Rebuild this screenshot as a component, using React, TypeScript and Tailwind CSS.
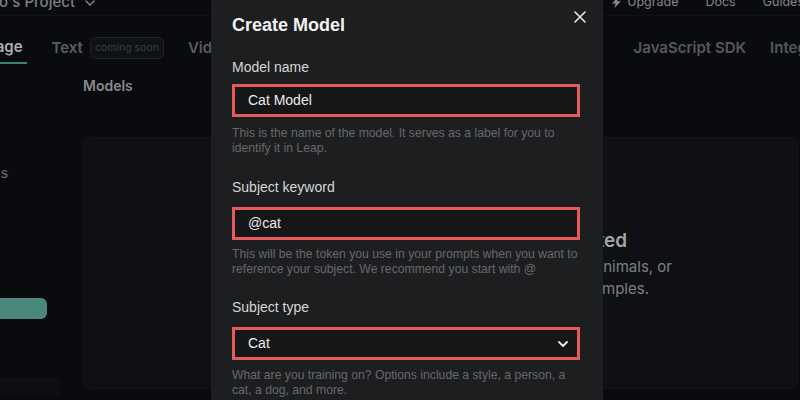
import React from "react";

const Field = ({
  label,
  value,
  help,
  select,
  labelGap,
  helpGap,
  top,
}: {
  label: string;
  value: string;
  help: string;
  select?: boolean;
  labelGap: string;
  helpGap: string;
  top: string;
}) => (
  <div className={top}>
    <div className="text-[14px] leading-[20px] text-[#d6d6d6]">{label}</div>
    <div
      className={`${labelGap} flex h-[33px] items-center justify-between border-[3px] border-[#e35b5c] bg-[#151618] pl-[13px] pr-[8px] text-[14px] text-[#ececec]`}
    >
      <span>{value}</span>
      {select && (
        <svg width="10" height="6" viewBox="0 0 10 6" fill="none" className="mr-[1px]">
          <path d="M1 1l4 4 4-4" stroke="#f0f0f0" strokeWidth="1.8" strokeLinecap="round" strokeLinejoin="round" />
        </svg>
      )}
    </div>
    <p className={`${helpGap} text-[12.2px] leading-[15px] text-[#66686c]`}>{help}</p>
  </div>
);

const App = () => {
  return (
    <div className="relative h-[400px] w-[800px] overflow-hidden bg-[#0a0b0e] font-['Inter',sans-serif]">
      {/* header */}
      <div className="-mt-[10px] flex h-[26px] items-center border-b border-[#101216]">
        <div className="-ml-[46px] flex shrink-0 items-center gap-[10px] text-[15px] font-medium text-[#7c7f83]">
          <span className="whitespace-nowrap">Jericho's Project</span>
          <svg width="10" height="6" viewBox="0 0 10 6" fill="none">
            <path d="M1 1l4 4 4-4" stroke="#7c7f83" strokeWidth="1.6" strokeLinecap="round" />
          </svg>
        </div>
        <div className="ml-auto -mr-[4px] flex shrink-0 items-center text-[12.5px] text-[#85878b]">
          <svg width="9" height="11" viewBox="0 0 9 11" className="mr-[6px]">
            <path d="M6 0L0 6.5h3.5L2.5 11 9 4.2H5.4L6 0z" fill="#85878b" />
          </svg>
          <span>Upgrade</span>
          <span className="ml-[27px]">Docs</span>
          <span className="ml-[27px]">Guides</span>
        </div>
      </div>

      {/* tabs */}
      <div className="mt-[14px] flex h-[34px] items-stretch text-[15px] font-semibold">
        <div className="-ml-[22px] flex shrink-0 items-center border-b-2 border-[#3a8373] pr-[4px] pt-[2px] text-[#aeb0b3]">
          Image
        </div>
        <div className="ml-[25px] flex shrink-0 items-center gap-[7px] pt-[2px] text-[#5a5d61]">
          <span>Text</span>
          <span className="rounded-md border border-[#212428] bg-[#0f1114] px-[4px] py-[2px] text-[10.5px] font-normal text-[#3b3e42]">
            coming soon
          </span>
        </div>
        <div className="ml-[24px] flex shrink-0 items-center pt-[2px] text-[#5a5d61]">Video</div>
        <div className="ml-auto flex shrink-0 items-center whitespace-nowrap pt-[2px] text-[#56595d]">JavaScript SDK</div>
        <div className="ml-[24px] -mr-[57px] flex shrink-0 items-center pt-[2px] text-[#56595d]">Integrations</div>
      </div>

      {/* body */}
      <div className="flex">
        <div className="flex w-[83px] shrink-0 flex-col">
          <div className="-ml-[40px] mt-[98px] text-[14px] text-[#6c6f73]">Images</div>
          <div className="-ml-[20px] mt-[115px] h-[21px] w-[67px] rounded-md bg-[#4a877d]" />
          <div className="-ml-[20px] mt-[59px] h-[18px] w-[80px] rounded bg-[#0d0f12]" />
        </div>
        <div className="flex flex-1 flex-col">
          <div className="pt-[12px] text-[14px] font-semibold leading-[20px] text-[#86898d]">Models</div>
          <div className="mr-[2px] mt-[41px] flex h-[252px] flex-col items-end rounded-md border border-[#121418] bg-[#0e1014] pt-[89px] pr-[125px]">
            <div className="mr-[45px] text-[19px] font-semibold text-[#a3a5a8]">No models created</div>
            <div className="text-[15px] leading-[22px] text-[#7d8084]">
              Train a model on people, animals, or
            </div>
            <div className="mr-[23px] text-[15px] leading-[22px] text-[#7d8084]">
              styles with just a few examples.
            </div>
          </div>
        </div>
      </div>

      {/* modal */}
      <div className="absolute bottom-0 left-[211px] top-0 w-[392px] overflow-hidden bg-[#1d1e20] pl-[21px] pr-[23px] pt-[13px] font-['Liberation_Sans',Arial,sans-serif]">
        <div className="flex items-center justify-between">
          <h2 className="text-[18px] font-bold leading-[24px] text-[#f2f2f2]">Create Model</h2>
          <svg width="12" height="12" viewBox="0 0 12 12" className="-mr-[6px] -mt-[16px]">
            <path d="M1 1l10 10M11 1L1 11" stroke="#e6e6e6" strokeWidth="1.6" strokeLinecap="round" />
          </svg>
        </div>
        <Field
          top="mt-[20px]"
          label="Model name"
          value="Cat Model"
          labelGap="mt-[7px]"
          helpGap="mt-[9px]"
          help="This is the name of the model. It serves as a label for you to identify it in Leap."
        />
        <Field
          top="mt-[21px]"
          label="Subject keyword"
          value="@cat"
          labelGap="mt-[10px]"
          helpGap="mt-[7px]"
          help="This will be the token you use in your prompts when you want to reference your subject. We recommend you start with @"
        />
        <Field
          top="mt-[20px]"
          label="Subject type"
          value="Cat"
          select
          labelGap="mt-[10px]"
          helpGap="mt-[8px]"
          help="What are you training on? Options include a style, a person, a cat, a dog, and more."
        />
      </div>
    </div>
  );
};

export default App;
